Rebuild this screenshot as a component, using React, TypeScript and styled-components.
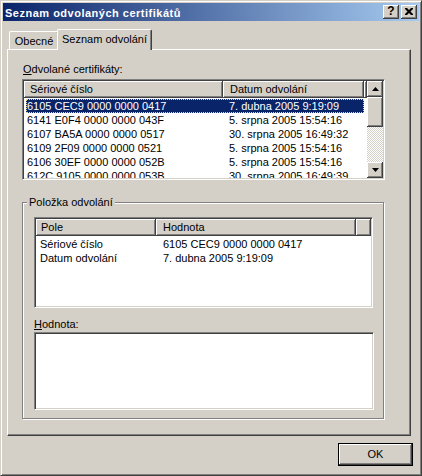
import React from 'react'
import styled, { createGlobalStyle, css } from 'styled-components'

const FACE = '#d4d0c8'
const SHADOW = '#808080'
const DARK = '#404040'
const HILITE = '#ffffff'
const SELECTED = '#0a246a'

const GlobalStyle = createGlobalStyle`
    html, body {
        margin: 0;
        padding: 0;
        background: ${FACE};
    }

    body {
        font-family: 'Liberation Sans', Arial, sans-serif;
        font-size: 11px;
        color: #000000;
    }

    * {
        box-sizing: border-box;
    }
`

const raised = css`
    background: ${FACE};
    box-shadow: inset -1px -1px ${DARK}, inset 1px 1px ${HILITE},
        inset -2px -2px ${SHADOW}, inset 2px 2px ${FACE};
`

const sunken = css`
    border: 1px solid;
    border-color: ${SHADOW} ${HILITE} ${HILITE} ${SHADOW};
    box-shadow: inset 1px 1px ${DARK}, inset -1px -1px ${FACE};
    padding: 1px;
    background: #ffffff;
`

const certificates = [
    ['6105 CEC9 0000 0000 0417', '7. dubna 2005 9:19:09'],
    ['6141 E0F4 0000 0000 043F', '5. srpna 2005 15:54:16'],
    ['6107 BA5A 0000 0000 0517', '30. srpna 2005 16:49:32'],
    ['6109 2F09 0000 0000 0521', '5. srpna 2005 15:54:16'],
    ['6106 30EF 0000 0000 052B', '5. srpna 2005 15:54:16'],
    ['612C 9105 0000 0000 053B', '30. srpna 2005 16:49:39'],
]

const details = [
    ['Sériové číslo', '6105 CEC9 0000 0000 0417'],
    ['Datum odvolání', '7. dubna 2005 9:19:09'],
]

export default function App() {
    return (
        <>
            <GlobalStyle />
            <Window>
                <TitleBar>
                    <TitleText>Seznam odvolaných certifikátů</TitleText>
                    <CaptionButton>
                        <HelpGlyph>?</HelpGlyph>
                    </CaptionButton>
                    <CaptionButton $gap>
                        <svg width="8" height="7" viewBox="0 0 8 7">
                            <path
                                d="M0 0h2l2 2 2-2h2v1L5.5 3.5 8 6v1H6L4 5 2 7H0V6l2.5-2.5L0 1z"
                                fill="#000"
                            />
                        </svg>
                    </CaptionButton>
                </TitleBar>
                <Body>
                    <TabStrip>
                        <Tab $width={50}>Obecné</Tab>
                        <Tab $width={95} $active>
                            Seznam odvolání
                        </Tab>
                    </TabStrip>
                    <TabPanel>
                        <FieldLabel>
                            <u>O</u>dvolané certifikáty:
                        </FieldLabel>
                        <ListBox $width={363} $height={101}>
                            <ListMain>
                                <Header>
                                    <HeaderCell $width={199} $pad={5}>
                                        Sériové číslo
                                    </HeaderCell>
                                    <HeaderCell $width={141} $pad={6}>
                                        Datum odvolání
                                    </HeaderCell>
                                    <HeaderCell $fill />
                                </Header>
                                <Rows>
                                    {certificates.map(([serial, date], i) => (
                                        <Row key={serial} $indent={2} $width={338} $selected={i === 0}>
                                            <Cell $width={197} $pad={1}>
                                                {serial}
                                            </Cell>
                                            <Cell $pad={6}>{date}</Cell>
                                        </Row>
                                    ))}
                                </Rows>
                            </ListMain>
                            <ScrollBar>
                                <ScrollButton>
                                    <svg width="7" height="4" viewBox="0 0 7 4">
                                        <path d="M3.5 0L7 4H0z" fill="#000" />
                                    </svg>
                                </ScrollButton>
                                <Thumb />
                                <Track />
                                <ScrollButton>
                                    <svg width="7" height="4" viewBox="0 0 7 4">
                                        <path d="M0 0h7L3.5 4z" fill="#000" />
                                    </svg>
                                </ScrollButton>
                            </ScrollBar>
                        </ListBox>
                        <GroupBox>
                            <Legend>Položka odvolání</Legend>
                            <ListBox $width={339} $height={91}>
                                <ListMain>
                                    <Header>
                                        <HeaderCell $width={120} $pad={4}>
                                            Pole
                                        </HeaderCell>
                                        <HeaderCell $width={200} $pad={6}>
                                            Hodnota
                                        </HeaderCell>
                                        <HeaderCell $fill />
                                    </Header>
                                    <Rows>
                                        {details.map(([field, value]) => (
                                            <Row key={field} $indent={0}>
                                                <Cell $width={120} $pad={4}>
                                                    {field}
                                                </Cell>
                                                <Cell $pad={7}>{value}</Cell>
                                            </Row>
                                        ))}
                                    </Rows>
                                </ListMain>
                            </ListBox>
                            <ValueLabel>
                                <u>H</u>odnota:
                            </ValueLabel>
                            <ValueBox />
                        </GroupBox>
                    </TabPanel>
                    <Footer>
                        <DefaultButton>OK</DefaultButton>
                    </Footer>
                </Body>
            </Window>
        </>
    )
}

const Window = styled.div`
    background: ${FACE};
    border: 1px solid;
    border-color: ${FACE} ${DARK} ${DARK} ${FACE};
    box-shadow: inset 1px 1px ${HILITE}, inset -1px -1px ${SHADOW};
    display: flex;
    flex-direction: column;
    height: 476px;
    padding: 2px;
    width: 422px;
`

const TitleBar = styled.div`
    align-items: center;
    background: linear-gradient(to right, #0a246a, #a6caf0);
    display: flex;
    flex-shrink: 0;
    height: 18px;
    padding: 0 2px 0 2px;
`

const TitleText = styled.div`
    color: #ffffff;
    flex: 1;
    font-size: 11px;
    font-weight: bold;
    letter-spacing: 0.5px;
    line-height: 18px;
    padding-top: 1px;
    white-space: nowrap;
`

const CaptionButton = styled.div<{ $gap?: boolean }>`
    ${raised};
    align-items: center;
    display: flex;
    height: 14px;
    justify-content: center;
    margin-left: ${({ $gap }) => ($gap ? '2px' : '0')};
    padding-bottom: 1px;
    width: 16px;
`

const HelpGlyph = styled.span`
    font-size: 12px;
    font-weight: bold;
    line-height: 11px;
`

const Body = styled.div`
    display: flex;
    flex: 1;
    flex-direction: column;
    padding: 8px 4px 0 4px;
`

const TabStrip = styled.div`
    align-items: flex-end;
    display: flex;
    height: 20px;
    padding-left: 2px;
    position: relative;
    z-index: 1;
`

const Tab = styled.div<{ $width: number; $active?: boolean }>`
    background: ${FACE};
    border-left: 1px solid ${HILITE};
    border-right: 1px solid ${DARK};
    border-top: 1px solid ${HILITE};
    border-top-left-radius: 2px;
    border-top-right-radius: 2px;
    box-shadow: inset -1px 0 ${SHADOW};
    height: ${({ $active }) => ($active ? '21px' : '18px')};
    line-height: 13px;
    margin: ${({ $active }) => ($active ? '0 -2px -1px -2px' : '0')};
    padding-top: 3px;
    text-align: center;
    white-space: nowrap;
    width: ${({ $width }) => $width}px;
`

const TabPanel = styled.div`
    border: 1px solid;
    border-color: ${HILITE} ${DARK} ${DARK} ${HILITE};
    box-shadow: inset -1px -1px ${SHADOW};
    display: flex;
    flex-direction: column;
    height: 387px;
    padding: 13px 0 0 14px;
    width: 404px;
`

const FieldLabel = styled.div`
    height: 13px;
    line-height: 13px;
    margin-bottom: 3px;
    padding-left: 1px;
`

const ListBox = styled.div<{ $width: number; $height: number }>`
    ${sunken};
    display: flex;
    flex-shrink: 0;
    height: ${({ $height }) => $height}px;
    overflow: hidden;
    width: ${({ $width }) => $width}px;
`

const ListMain = styled.div`
    display: flex;
    flex: 1;
    flex-direction: column;
    min-width: 0;
    overflow: hidden;
`

const Header = styled.div`
    display: flex;
    flex-shrink: 0;
    height: 17px;
`

const HeaderCell = styled.div<{ $width?: number; $pad?: number; $fill?: boolean }>`
    ${raised};
    box-shadow: inset -1px -1px ${DARK}, inset 1px 1px ${HILITE}, inset -2px -2px ${SHADOW};
    flex: ${({ $fill }) => ($fill ? '1' : 'none')};
    line-height: 17px;
    padding-left: ${({ $pad = 0 }) => $pad + 1}px;
    white-space: nowrap;
    width: ${({ $width }) => ($width ? `${$width}px` : 'auto')};
`

const Rows = styled.div`
    padding-top: 1px;
`

const Row = styled.div<{ $indent: number; $width?: number; $selected?: boolean }>`
    display: flex;
    height: 14px;
    line-height: 14px;
    margin-left: ${({ $indent }) => $indent}px;
    white-space: nowrap;
    width: ${({ $width }) => ($width ? `${$width}px` : 'auto')};

    ${({ $selected }) =>
        $selected &&
        css`
            background: ${SELECTED};
            color: #ffffff;
            outline: 1px dotted #f0d890;
            outline-offset: -1px;
        `}
`

const Cell = styled.div<{ $width?: number; $pad: number }>`
    flex-shrink: 0;
    padding-left: ${({ $pad }) => $pad}px;
    width: ${({ $width }) => ($width ? `${$width}px` : 'auto')};
`

const ScrollBar = styled.div`
    display: flex;
    flex-direction: column;
    flex-shrink: 0;
    width: 16px;
`

const ScrollButton = styled.div`
    ${raised};
    align-items: center;
    display: flex;
    flex-shrink: 0;
    height: 16px;
    justify-content: center;
`

const Thumb = styled.div`
    ${raised};
    flex-shrink: 0;
    height: 30px;
`

const Track = styled.div`
    background: repeating-conic-gradient(${HILITE} 0 25%, ${FACE} 0 50%) 0 0 / 2px 2px;
    flex: 1;
`

const GroupBox = styled.div`
    border: 1px solid ${SHADOW};
    box-shadow: inset 1px 1px ${HILITE}, 1px 1px ${HILITE};
    display: flex;
    flex-direction: column;
    height: 217px;
    margin-top: 22px;
    padding: 14px 10px 0 11px;
    position: relative;
    width: 362px;
`

const Legend = styled.span`
    background: ${FACE};
    left: 4px;
    line-height: 13px;
    padding: 0 2px;
    position: absolute;
    top: -7px;
`

const ValueLabel = styled.div`
    height: 13px;
    line-height: 13px;
    margin: 10px 0 1px 0;
`

const ValueBox = styled.div`
    ${sunken};
    height: 78px;
    width: 340px;
`

const Footer = styled.div`
    display: flex;
    justify-content: flex-end;
    padding: 7px 2px 0 0;
`

const DefaultButton = styled.div`
    ${raised};
    border: 1px solid #000000;
    box-shadow: inset -1px -1px ${DARK}, inset 1px 1px ${HILITE}, inset -2px -2px ${SHADOW};
    height: 23px;
    line-height: 21px;
    text-align: center;
    width: 75px;
`
